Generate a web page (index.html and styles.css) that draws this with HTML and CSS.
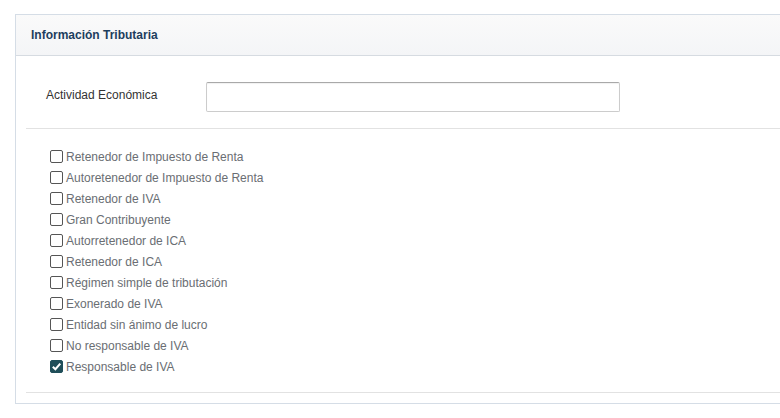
FILE: index.html
```html
<!DOCTYPE html>
<html lang="es">
<head>
    <meta charset="UTF-8">
    <title>Información Tributaria</title>
    <link rel="stylesheet" href="styles.css">
</head>
<body>
    <div class="panel">
        <div class="panel-heading">
            <h3 class="panel-title">Información Tributaria</h3>
        </div>
        <div class="panel-body">
            <div class="form-row">
                <label class="row-label" for="actividad">Actividad Económica</label>
                <input type="text" class="form-control" id="actividad">
            </div>
            <ul class="check-list">
                <li><label><span class="check"></span>Retenedor de Impuesto de Renta</label></li>
                <li><label><span class="check"></span>Autoretenedor de Impuesto de Renta</label></li>
                <li><label><span class="check"></span>Retenedor de IVA</label></li>
                <li><label><span class="check"></span>Gran Contribuyente</label></li>
                <li><label><span class="check"></span>Autorretenedor de ICA</label></li>
                <li><label><span class="check"></span>Retenedor de ICA</label></li>
                <li><label><span class="check"></span>Régimen simple de tributación</label></li>
                <li><label><span class="check"></span>Exonerado de IVA</label></li>
                <li><label><span class="check"></span>Entidad sin ánimo de lucro</label></li>
                <li><label><span class="check"></span>No responsable de IVA</label></li>
                <li><label><span class="check checked"><svg viewBox="0 0 14 14" width="11" height="11"><path d="M2.3 7.2 L5.6 10.4 L11.8 3.4" fill="none" stroke="#fff" stroke-width="2.6"/></svg></span>Responsable de IVA</label></li>
            </ul>
        </div>
    </div>
</body>
</html>
```

FILE: styles.css
```css
body {
    margin: 0;
    padding: 14px 0 0 15px;
    font-family: "Liberation Sans", Arial, sans-serif;
    font-size: 12px;
    background-color: #fff;
    overflow: hidden;
}
.panel {
    width: 800px;
    border: 1px solid #d5dde6;
    background-color: #fff;
}
.panel-heading {
    height: 40px;
    display: flex;
    align-items: center;
    padding: 0 15px;
    background: linear-gradient(#fafafa, #f4f5f7);
    border-bottom: 1px solid #d6dbe1;
}
.panel-title {
    margin: 0;
    font-size: 12px;
    font-weight: bold;
    color: #1d3e5e;
}
.panel-body {
    padding: 0 0 10px 10px;
}
.form-row {
    display: flex;
    align-items: center;
    padding: 26px 0 16px 20px;
    border-bottom: 1px solid #e2e2e2;
}
.row-label {
    width: 160px;
    color: #333;
    margin-bottom: 4px;
}
.form-control {
    width: 414px;
    height: 30px;
    box-sizing: border-box;
    border: 1px solid #ccc;
    border-top-color: #a9a9a9;
    border-radius: 2px;
    box-shadow: inset 0 1px 1px rgba(0, 0, 0, 0.06);
    margin: 0;
}
.check-list {
    list-style: none;
    margin: 0;
    padding: 17px 0 15px 24px;
    border-bottom: 1px solid #e2e2e2;
}
.check-list li {
    height: 21px;
    display: flex;
    align-items: center;
}
.check-list label {
    display: flex;
    align-items: center;
    color: #6a6e73;
}
.check {
    width: 11px;
    height: 11px;
    border: 1px solid #555;
    border-radius: 2px;
    margin-right: 3px;
    display: flex;
    align-items: center;
    justify-content: center;
}
.check.checked {
    background-color: #1f4e59;
    border-color: #1f4e59;
}
```
